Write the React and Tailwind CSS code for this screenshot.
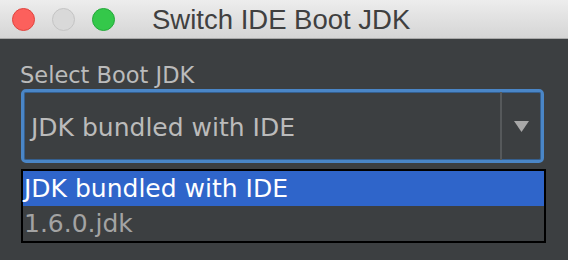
import React from 'react';

const App = () => {
  return (
    <div className="w-[568px] h-[260px] bg-[#3c3f41] overflow-hidden" style={{ fontFamily: '"DejaVu Sans", sans-serif' }}>
      {/* Title bar */}
      <div className="h-[39px] flex items-center bg-gradient-to-b from-[#ededed] to-[#d5d5d5] border-b border-[#a9a9a9]">
        <div className="flex items-center gap-[17px] pl-[12px]">
          <span className="w-[23px] h-[23px] rounded-full bg-[#fc605c] border border-[#e0443e]" />
          <span className="w-[23px] h-[23px] rounded-full bg-[#d9d9d9] border border-[#c4c4c4]" />
          <span className="w-[23px] h-[23px] rounded-full bg-[#34c84a] border border-[#24a93a]" />
        </div>
        <span className="ml-[37px] text-[27.5px] leading-none text-[#404040] pt-[1px]" style={{ fontFamily: '"Liberation Sans", Arial, sans-serif' }}>
          Switch IDE Boot JDK
        </span>
      </div>

      <div className="pl-[21px] pr-[22px]">
        <div className="mt-[21px] h-[28px] text-[22.5px] leading-[28px] text-[#bbbbbb] -ml-[1px] pt-[1px]">Select Boot JDK</div>

        {/* Combo box */}
        <div className="mt-[1px] w-[523px] h-[74px] rounded-[5px] border-[3px] border-[#4a86c7] shadow-[inset_0_0_0_1px_#355f8e] flex">
          <div className="flex-1 flex items-center pl-[7px] pt-[3px] text-[25px] leading-[30px] text-[#bbbbbb]">
            JDK bundled with IDE
          </div>
          <div className="w-[41px] border-l-2 border-[#56595b] flex items-center justify-center">
            <svg width="15" height="11" viewBox="0 0 15 11">
              <polygon points="0,0 15,0 7.5,11" fill="#a8a8a8" />
            </svg>
          </div>
        </div>

        {/* Popup list */}
        <div className="mt-[6px] w-[525px] h-[74px] border-2 border-black bg-[#3c3f41] flex flex-col">
          <div className="h-[35px] bg-[#2f65ca] text-white text-[25px] leading-[35px] pl-[1px]">JDK bundled with IDE</div>
          <div className="h-[35px] text-[#a3a3a3] text-[25px] leading-[35px] pl-[1px]">1.6.0.jdk</div>
        </div>
      </div>
    </div>
  );
};

export default App;
